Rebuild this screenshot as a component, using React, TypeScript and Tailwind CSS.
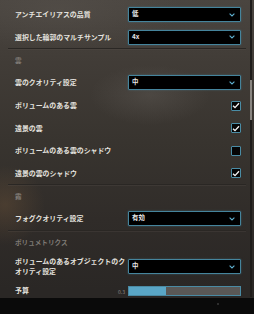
import React from "react";

const font = { fontFamily: '"Noto Sans CJK JP", "Noto Sans", sans-serif' };

function Chevron() {
  return (
    <svg width="6" height="4" viewBox="0 0 6 4" className="absolute right-[5px] top-1/2 -translate-y-1/2">
      <path d="M0.6 0.6 L3 3 L5.4 0.6" fill="none" stroke="#5fb0d0" strokeWidth="1.1" />
    </svg>
  );
}

function Dropdown({ value }: { value: string }) {
  return (
    <div className="relative w-[113px] h-[15px] bg-black border border-[#45849c] rounded-[1px] shadow-[0_0_2px_rgba(80,150,180,0.5)] flex items-center pl-[3px]">
      <span className="text-[6.4px] text-[#e6e6e6] font-bold leading-none">{value}</span>
      <Chevron />
    </div>
  );
}

function Checkbox({ checked }: { checked: boolean }) {
  return (
    <div className="w-[10px] h-[10px] bg-[#050505] border border-[#4a8ca5] rounded-[1px] flex items-center justify-center">
      {checked && (
        <svg width="8" height="7" viewBox="0 0 8 7">
          <path d="M1 3.8 L3 5.6 L7 1.2" fill="none" stroke="#f2f2f2" strokeWidth="1.4" />
        </svg>
      )}
    </div>
  );
}

function Row({ h, label, children }: { h: string; label: string; children: React.ReactNode }) {
  return (
    <div className={`${h} flex items-center justify-between pl-[15px] pr-[13px]`}>
      <span className="text-[6.9px] leading-none font-bold text-[#e4e2df]">{label}</span>
      {children}
    </div>
  );
}

function Sep() {
  return <div className="h-px mx-[8px] bg-[#2a2724] shadow-[0_1px_0_rgba(90,85,80,0.25)]" />;
}

function Header({ h, label }: { h: string; label: string }) {
  return (
    <div className={`${h} flex items-center pl-[15px]`}>
      <span className="text-[6.6px] leading-none font-bold text-[#7f7a75]">{label}</span>
    </div>
  );
}

export default function App() {
  return (
    <div
      style={font}
      className="relative w-[254px] h-[314px] overflow-hidden flex flex-col bg-[linear-gradient(180deg,#4a4540_0%,#413c37_20%,#38342f_45%,#302c29_70%,#2a2725_92%)]"
    >
      <div className="absolute inset-0 bg-[radial-gradient(ellipse_60px_30px_at_150px_95px,rgba(120,115,110,0.25),transparent)]" />
      <div className="absolute inset-0 bg-[radial-gradient(ellipse_40px_40px_at_5px_205px,rgba(120,90,60,0.35),transparent)]" />
      <div className="absolute inset-0 bg-[radial-gradient(ellipse_120px_40px_at_60px_10px,rgba(95,90,84,0.35),transparent)]" />
      <div className="absolute right-[2px] top-0 bottom-[17px] w-[2px] bg-[#1f1d1b]" />
      <div className="absolute right-[2px] top-[80px] h-[40px] w-[2px] bg-[#8a8681]" />

      <div className="relative flex flex-col pt-[3px]">
        <Row h="h-[23px]" label="アンチエイリアスの品質">
          <Dropdown value="低" />
        </Row>
        <Row h="h-[22px]" label="選択した輪郭のマルチサンプル">
          <Dropdown value="4x" />
        </Row>
        <Sep />
        <Header h="h-[22px]" label="雲" />
        <Row h="h-[23px]" label="雲のクオリティ設定">
          <Dropdown value="中" />
        </Row>
        <Row h="h-[23px]" label="ボリュームのある雲">
          <Checkbox checked />
        </Row>
        <Row h="h-[22px]" label="遠景の雲">
          <Checkbox checked />
        </Row>
        <Row h="h-[23px]" label="ボリュームのある雲のシャドウ">
          <Checkbox checked={false} />
        </Row>
        <Row h="h-[22px]" label="遠景の雲のシャドウ">
          <Checkbox checked />
        </Row>
        <Sep />
        <Header h="h-[22px]" label="霧" />
        <Row h="h-[23px]" label="フォグクオリティ設定">
          <Dropdown value="有効" />
        </Row>
        <Sep />
        <Header h="h-[23px]" label="ボリュメトリクス" />
        <div className="h-[25px] flex items-center justify-between pl-[15px] pr-[13px]">
          <span className="w-[112px] text-[6.9px] leading-[9.3px] font-bold text-[#e4e2df]">
            ボリュームのあるオブジェクトのクオリティ設定
          </span>
          <Dropdown value="中" />
        </div>
        <div className="h-[18px] flex items-end justify-between pl-[15px] pr-[13px] pb-[1px]">
          <span className="text-[6.9px] leading-none font-bold text-[#e4e2df] mb-[2px]">予算</span>
          <div className="flex items-center gap-[3px]">
            <span className="text-[5px] leading-none text-[#8a8580]">0.3</span>
            <div className="w-[113px] h-[10px] border border-[#4a8aa3] bg-[#5a5856] flex">
              <div className="w-[37px] h-full bg-[#5aa6c6]" />
            </div>
          </div>
        </div>
      </div>
      <div className="relative flex-1 bg-[#0a0a0a] mt-[1px]">
        <div className="absolute left-[217px] top-[5px] w-[2px] h-[2px] rounded-full bg-[#3a3a3a]" />
      </div>
    </div>
  );
}
